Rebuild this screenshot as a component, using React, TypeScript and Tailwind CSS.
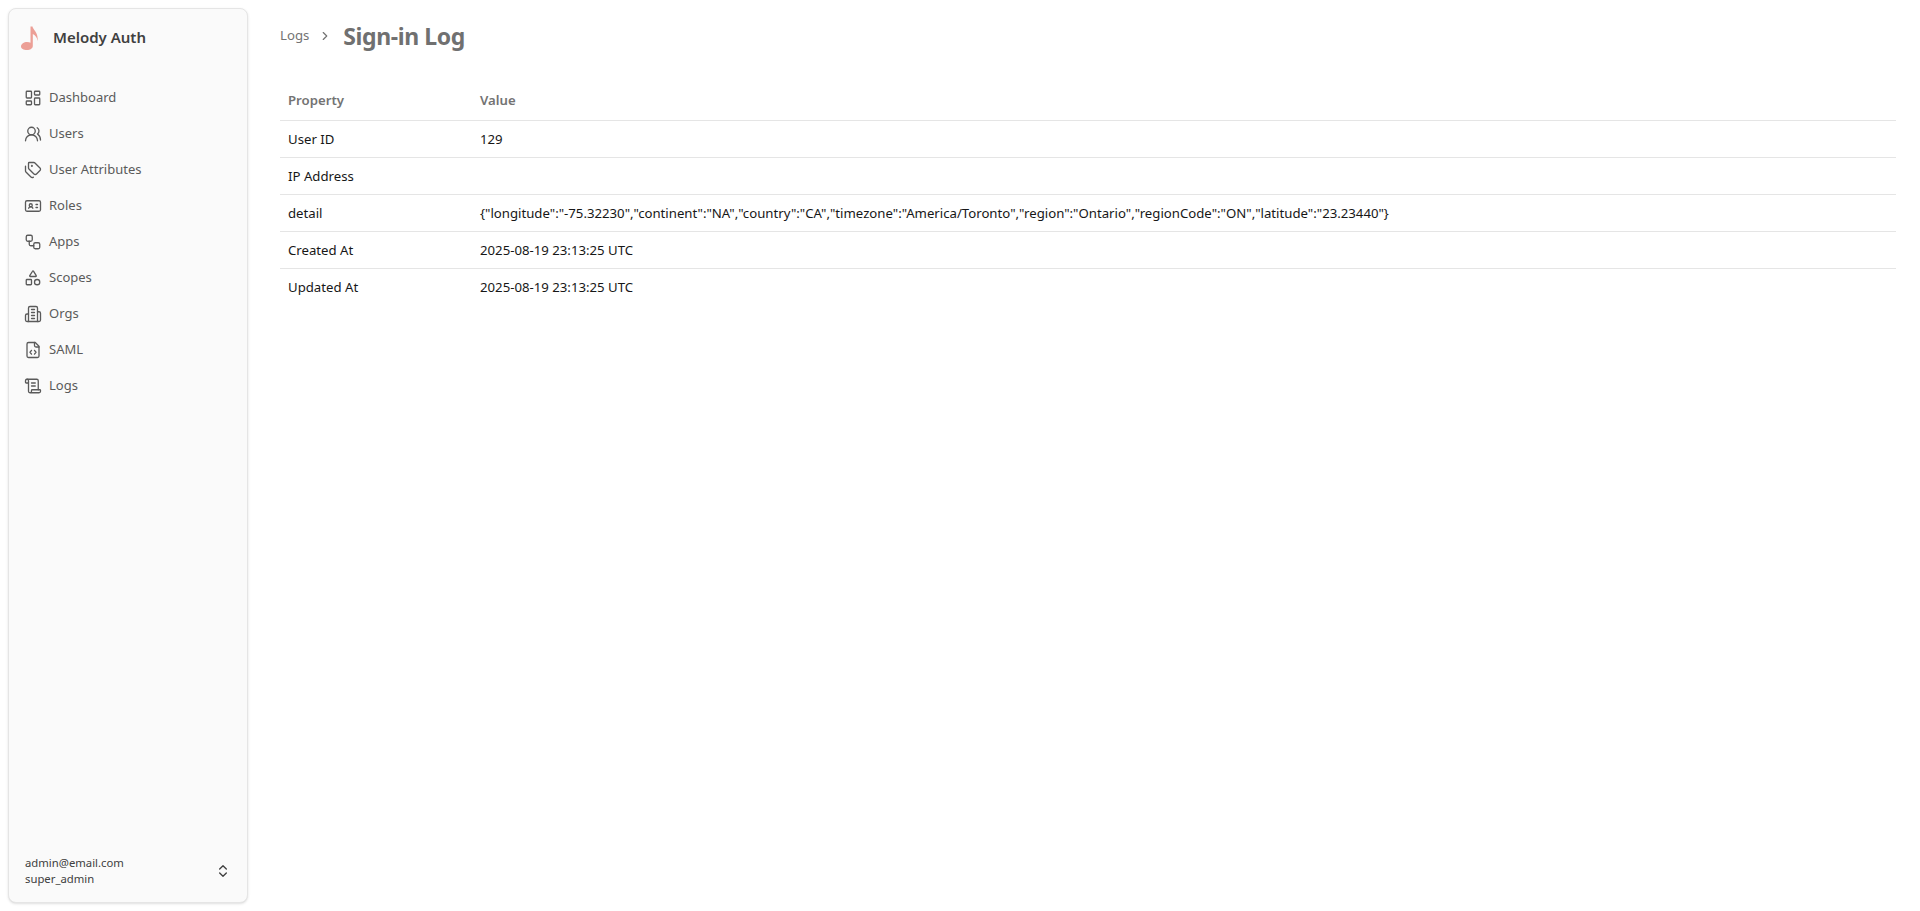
import {
  ChevronRight,
  ChevronsUpDown,
  IdCard,
  LayoutDashboard,
  ScrollText,
  Shapes,
  Tags,
  UsersRound,
  Workflow,
} from "lucide-react";

type IconProps = { size: number; strokeWidth: number };

const OrgIcon = ({ size, strokeWidth }: IconProps) => (
  <svg
    width={size}
    height={size}
    viewBox="0 0 24 24"
    fill="none"
    stroke="currentColor"
    strokeWidth={strokeWidth}
    strokeLinecap="round"
    strokeLinejoin="round"
  >
    <path d="M6 22V4a2 2 0 0 1 2-2h8a2 2 0 0 1 2 2v18Z" />
    <path d="M6 12H4a2 2 0 0 0-2 2v6a2 2 0 0 0 2 2h2" />
    <path d="M18 9h2a2 2 0 0 1 2 2v9a2 2 0 0 1-2 2h-2" />
    <path d="M10 6h4" />
    <path d="M10 10h4" />
    <path d="M10 14h4" />
    <path d="M10 18h4" />
  </svg>
);

const SamlIcon = ({ size, strokeWidth }: IconProps) => (
  <svg
    width={size}
    height={size}
    viewBox="0 0 24 24"
    fill="none"
    stroke="currentColor"
    strokeWidth={strokeWidth}
    strokeLinecap="round"
    strokeLinejoin="round"
  >
    <path d="M15 2H6a2 2 0 0 0-2 2v16a2 2 0 0 0 2 2h12a2 2 0 0 0 2-2V7z" />
    <path d="M14 2v4a2 2 0 0 0 2 2h4" />
    <path d="M10 12.500 8 15l2 2.500" />
    <path d="m14 12.500 2 2.500-2 2.500" />
  </svg>
);

const navItems = [
  { label: "Dashboard", icon: LayoutDashboard },
  { label: "Users", icon: UsersRound },
  { label: "User Attributes", icon: Tags },
  { label: "Roles", icon: IdCard },
  { label: "Apps", icon: Workflow },
  { label: "Scopes", icon: Shapes },
  { label: "Orgs", icon: OrgIcon },
  { label: "SAML", icon: SamlIcon },
  { label: "Logs", icon: ScrollText },
];

const rows = [
  { name: "User ID", value: "129" },
  { name: "IP Address", value: "" },
  {
    name: "detail",
    value:
      '{"longitude":"-75.32230","continent":"NA","country":"CA","timezone":"America/Toronto","region":"Ontario","regionCode":"ON","latitude":"23.23440"}',
  },
  { name: "Created At", value: "2025-08-19 23:13:25 UTC" },
  { name: "Updated At", value: "2025-08-19 23:13:25 UTC" },
];

const Logo = () => (
  <svg width="17" height="24" viewBox="0 0 17 24" fill="#ec9f96">
    <path d="M9.500 .5H11.500C12 4 17.500 6 16.600 15C16 11 14 9 11.800 8V20C11.800 22.500 9 24 6 24C2.500 24 0 22.500 0 20.500C0 18 3 16 6 16C7.500 16 8.700 16.300 9.500 16.800Z" />
  </svg>
);

const App = () => {
  return (
    <div className="flex h-[911px] bg-white font-['Noto_Sans',sans-serif] text-[13.2px]">
      <div className="w-64 shrink-0 p-2">
        <div className="flex h-full flex-col rounded-lg border border-[#e5e5e5] bg-[#fafafa] shadow-sm">
          <div className="flex h-[54px] items-center gap-[15px] pl-[12px] pt-[3px]">
            <Logo />
            <span className="text-[15px] font-semibold text-[#404040]">
              Melody Auth
            </span>
          </div>
          <nav className="mt-[17px] flex flex-col px-[15px]">
            {navItems.map((item) => (
              <a
                key={item.label}
                className="flex h-[36px] items-center gap-[7px] text-[13px] text-[#5a5a5a]"
              >
                <item.icon size={18} strokeWidth={1.75} />
                <span>{item.label}</span>
              </a>
            ))}
          </nav>
          <div className="mt-auto flex items-center justify-between px-[16px] pb-[15px] text-[11.3px] leading-4 text-[#404040]">
            <div>
              <div>admin@email.com</div>
              <div>super_admin</div>
            </div>
            <ChevronsUpDown size={16} />
          </div>
        </div>
      </div>
      <main className="flex-1 pl-[24px] pr-[24px]">
        <div className="flex h-[56px] items-center pt-[16px]">
          <span className="text-[#737373]">Logs</span>
          <ChevronRight size={14} className="mx-[9px] text-[#737373]" />
          <h1 className="ml-[2px] pt-[1px] text-[23px] font-bold tracking-[-0.4px] text-[#707070]">
            Sign-in Log
          </h1>
        </div>
        <table className="mt-[24px] w-full">
          <thead>
            <tr className="border-b border-[#e5e5e5]">
              <th className="h-[40px] w-[192px] px-2 pt-[2px] text-left font-semibold text-[#737373]">
                Property
              </th>
              <th className="px-2 pt-[2px] text-left font-semibold text-[#737373]">
                Value
              </th>
            </tr>
          </thead>
          <tbody>
            {rows.map((row) => (
              <tr key={row.name} className="border-b border-[#e5e5e5] last:border-0">
                <td className="h-[37px] px-2 pt-[2px] text-[#171717]">{row.name}</td>
                <td className="px-2 pt-[2px] text-[#171717]">{row.value}</td>
              </tr>
            ))}
          </tbody>
        </table>
      </main>
    </div>
  );
};

export default App;
